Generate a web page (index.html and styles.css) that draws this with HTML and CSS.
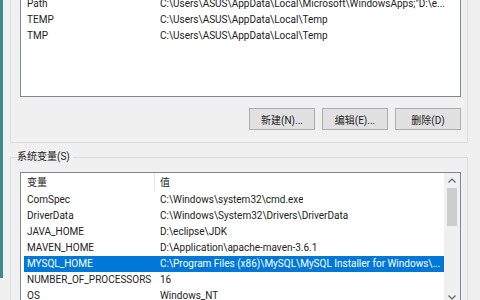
FILE: index.html
```html
<!DOCTYPE html>
<html lang="zh-CN">
  <head>
    <meta charset="UTF-8" />
    <title>环境变量</title>
    <link rel="stylesheet" href="styles.css">
  </head>
  <body>
    <div class="window">
      <div class="group user">
        <div class="list user-list">
          <div class="row"><span class="name">OneDrive</span><span class="value">C:\Users\ASUS\OneDrive</span></div>
          <div class="row"><span class="name">Path</span><span class="value">C:\Users\ASUS\AppData\Local\Microsoft\WindowsApps;"D:\e...</span></div>
          <div class="row"><span class="name">TEMP</span><span class="value">C:\Users\ASUS\AppData\Local\Temp</span></div>
          <div class="row"><span class="name">TMP</span><span class="value">C:\Users\ASUS\AppData\Local\Temp</span></div>
        </div>
        <div class="actions">
          <button class="btn">新建(N)...</button>
          <button class="btn">编辑(E)...</button>
          <button class="btn">删除(D)</button>
        </div>
      </div>

      <fieldset class="group sys">
        <legend>系统变量(S)</legend>
        <div class="list sys-list">
          <div class="list-main">
            <div class="list-head">
              <span class="name">变量</span>
              <span class="value">值</span>
            </div>
            <div class="row"><span class="name">ComSpec</span><span class="value">C:\Windows\system32\cmd.exe</span></div>
            <div class="row"><span class="name">DriverData</span><span class="value">C:\Windows\System32\Drivers\DriverData</span></div>
            <div class="row"><span class="name">JAVA_HOME</span><span class="value">D:\eclipse\JDK</span></div>
            <div class="row"><span class="name">MAVEN_HOME</span><span class="value">D:\Application\apache-maven-3.6.1</span></div>
            <div class="row sel"><span class="name">MYSQL_HOME</span><span class="value">C:\Program Files (x86)\MySQL\MySQL Installer for Windows\...</span></div>
            <div class="row"><span class="name">NUMBER_OF_PROCESSORS</span><span class="value">16</span></div>
            <div class="row"><span class="name">OS</span><span class="value">Windows_NT</span></div>
          </div>
          <div class="scrollbar">
            <div class="arrow">
              <svg width="8" height="5" viewBox="0 0 8 5"><path d="M0.5 4.5 L4 1 L7.5 4.5" fill="none" stroke="#606060" stroke-width="1.2" /></svg>
            </div>
            <div class="thumb"></div>
            <div class="track"></div>
            <div class="arrow">
              <svg width="8" height="5" viewBox="0 0 8 5"><path d="M0.5 0.5 L4 4 L7.5 0.5" fill="none" stroke="#606060" stroke-width="1.2" /></svg>
            </div>
          </div>
        </div>
      </fieldset>
    </div>
  </body>
</html>
```

FILE: styles.css
```css
html,
body {
  margin: 0;
  height: 300px;
  overflow: hidden;
}
body {
  font: 10px Roboto, "Noto Sans CJK SC", sans-serif;
  color: #222;
  background-color: #f0f0f0;
}
.window {
  border-left: 3px solid #3d8c88;
  height: 300px;
  box-sizing: border-box;
}
.group {
  margin: 0 12px 0 7px;
  border: 1px solid #dcdcdc;
}
.user {
  border-top: none;
  padding: 0 6px 12px 9px;
}
.list {
  background-color: #fff;
  border: 1px solid #828790;
  box-sizing: border-box;
}
.user-list {
  margin-top: -22px;
  height: 119px;
  padding-top: 1px;
}
.row,
.list-head {
  display: flex;
  height: 16px;
  line-height: 16px;
  white-space: nowrap;
  margin-left: 3px;
}
.name {
  width: 130px;
  padding-left: 3px;
  flex-shrink: 0;
  overflow: hidden;
}
.value {
  padding-left: 3px;
  overflow: hidden;
}
.actions {
  display: flex;
  justify-content: flex-end;
  gap: 7px;
  margin-top: 11px;
}
.btn {
  width: 66px;
  height: 22px;
  padding: 0;
  font: inherit;
  color: #222;
  background-color: #e1e1e1;
  border: 1px solid #adadad;
}
.sys {
  margin-top: 6px;
  padding: 0 6px 0 9px;
  min-width: 0;
}
.sys legend {
  margin-left: -3px;
  padding: 0 3px 0 0;
  line-height: 16px;
}
.sys-list {
  margin-top: 7px;
  height: 134px;
  display: flex;
  overflow: hidden;
}
.list-main {
  flex: 1;
  min-width: 0;
}
.list-head {
  height: 19px;
  line-height: 19px;
  margin-left: 0;
  padding-left: 3px;
}
.list-head .name {
  border-right: 1px solid #e5e5e5;
  width: 127px;
}
.list-head .value {
  padding-left: 5px;
}
.row.sel {
  background-color: #0078d7;
  color: #fff;
}
.scrollbar {
  width: 16px;
  flex-shrink: 0;
  background-color: #f0f0f0;
  display: flex;
  flex-direction: column;
  align-items: center;
}
.arrow {
  height: 15px;
  flex-shrink: 0;
  display: flex;
  align-items: center;
  justify-content: center;
}
.thumb {
  width: 10px;
  height: 38px;
  flex-shrink: 0;
  background-color: #cdcdcd;
}
.track {
  flex: 1;
}
```
